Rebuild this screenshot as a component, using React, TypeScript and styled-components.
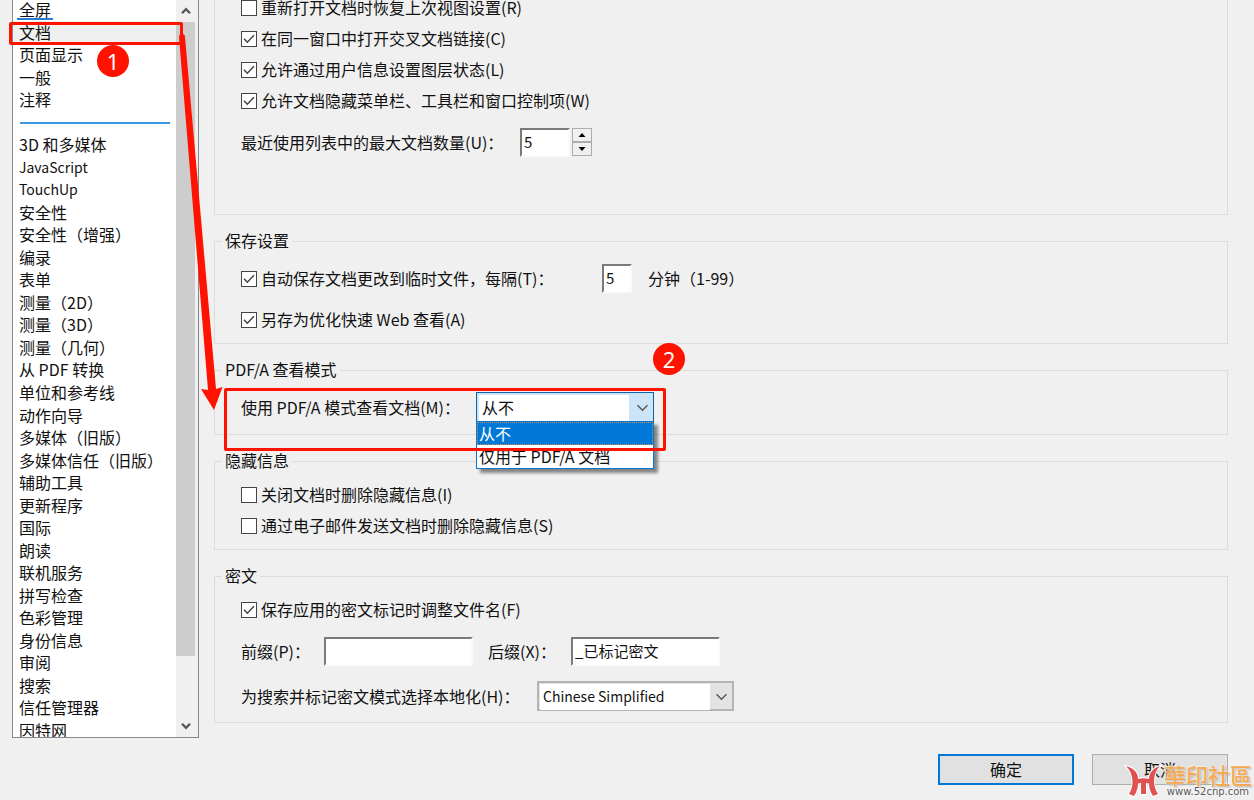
import React, { useState } from "react";
import styled, { createGlobalStyle, css } from "styled-components";

const font = `"Noto Sans CJK SC", "Noto Sans", sans-serif`;

const GlobalStyle = createGlobalStyle`
  *, *::before, *::after { box-sizing: border-box; }
  html, body { margin: 0; background: #f0f0f0; }
  body, button, input, select { font: 16px/24px ${font}; color: #111; }
  button { cursor: default; }
`;

const Dialog = styled.div`
  position: relative;
  display: grid;
  grid-template-columns: 187px 1fr;
  column-gap: 15px;
  align-items: start;
  padding: 0 26px 14px 12px;
`;

const ListPanel = styled.nav`
  display: grid;
  grid-template-columns: 1fr 22px;
  height: 738px;
  border: 1px solid #828790;
  border-top: 0;
  background: #fff;
  overflow: hidden;
`;

const CategoryList = styled.ul`
  display: grid;
  grid-auto-rows: 1fr;
  height: 743px;
  margin: -2px 0 0;
  padding: 0;
  list-style: none;
`;

const CategoryItem = styled.li<{ $active?: boolean }>`
  display: flex;
  align-items: center;
  min-height: 0;
  background: ${(p) => (p.$active ? "#f0f0f0" : "transparent")};
`;

const CategoryButton = styled.button<{ $marked?: boolean; $latin?: boolean }>`
  height: 22px;
  margin-left: 4px;
  padding: 0 2px;
  border: 0;
  background: none;
  font-size: ${(p) => (p.$latin ? 14 : 16)}px;
  line-height: 22px;
  white-space: nowrap;
  ${(p) => p.$marked && css`box-shadow: inset 0 -2px #2b7cd3;`}
`;

const Divider = styled.hr`
  width: 150px;
  height: 4px;
  margin: 0 0 0 7px;
  border: 0;
  border-bottom: 2px solid #3b97e0;
`;

const ScrollTrack = styled.div`
  display: flex;
  flex-direction: column;
  height: 737px;
  padding-right: 3px;
  background: #f0f0f0;
`;

const ScrollButton = styled.button`
  display: grid;
  place-items: center;
  height: 22px;
  padding: 0;
  border: 0;
  background: none;
`;

const ScrollThumb = styled.div`
  height: 634px;
  margin-bottom: auto;
  background: #cdcdcd;
`;

const Main = styled.main`
  display: flex;
  flex-direction: column;
  gap: 14px;
  min-width: 0;
`;

const Group = styled.fieldset<{ $top: number; $bottom: number }>`
  display: block;
  min-width: 0;
  margin: 0;
  padding: ${(p) => p.$top}px 26px ${(p) => p.$bottom}px;
  border: 1px solid #dcdcdc;
`;

const OpenGroup = styled(Group)`
  margin-top: -5px;
  border-top: 0;
`;

const Legend = styled.legend`
  margin-left: -19px;
  padding: 0 3px 2px;
  line-height: 22px;
`;

const Stack = styled.div<{ $gap: number }>`
  display: flex;
  flex-direction: column;
  gap: ${(p) => p.$gap}px;
`;

const Row = styled.div<{ $height?: number }>`
  display: flex;
  align-items: center;
  height: ${(p) => p.$height ?? 28}px;
  white-space: nowrap;
`;

const CheckLabel = styled.label`
  display: flex;
  align-items: center;
  gap: 4px;
  height: 24px;
  white-space: nowrap;
`;

const CheckBox = styled.span`
  display: grid;
  width: 16px;
  height: 16px;
  margin-top: 2px;
  > * { grid-area: 1 / 1; }
  svg { pointer-events: none; visibility: hidden; }
  input:checked + svg { visibility: visible; }
`;

const CheckInput = styled.input`
  appearance: none;
  width: 16px;
  height: 16px;
  margin: 0;
  border: 1px solid #444;
  background: #fff;
`;

const FieldLabel = styled.label<{ $width?: number; $gap?: number }>`
  width: ${(p) => (p.$width ? p.$width + "px" : "auto")};
  margin-left: ${(p) => p.$gap ?? 0}px;
`;

const SunkenInput = styled.input<{ $width: number }>`
  width: ${(p) => p.$width}px;
  height: 29px;
  padding: 0 3px 2px 2px;
  border: 2px solid;
  border-color: #7a7a7a #fafafa #fafafa #7a7a7a;
  border-radius: 0;
  outline: 0;
  background: #fff;
  font-size: 15px;
`;

const Spinner = styled.div`
  display: grid;
  grid-template-rows: 1fr 1fr;
  width: 20px;
  height: 28px;
  margin-left: 2px;
`;

const SpinButton = styled.button`
  display: grid;
  place-items: center;
  padding: 0;
  border: 1px solid #acacac;
  background: #f0f0f0;
`;

const Combo = styled.div<{ $width: number; $open?: boolean }>`
  position: relative;
  display: grid;
  width: ${(p) => p.$width}px;
  height: 30px;
  border: ${(p) => (p.$open ? "1px solid #0c62ac" : "2px solid #b4b4b4")};
  background: ${(p) => (p.$open ? "#cce4f7" : "#e3e3e3")};
`;

const ComboSelect = styled.select<{ $open?: boolean }>`
  grid-area: 1 / 1;
  appearance: none;
  margin: ${(p) => (p.$open ? "2px 24px 2px 2px" : "1px 22px 1px 1px")};
  padding: 0 4px 2px 3px;
  border: 0;
  border-radius: 0;
  outline: 0;
  background: #fff;
  font-size: ${(p) => (p.$open ? 16 : 14)}px;
`;

const ComboArrow = styled.svg`
  grid-area: 1 / 1;
  place-self: center end;
  margin-right: 4px;
  pointer-events: none;
`;

const Popup = styled.ul`
  position: absolute;
  top: 28px;
  left: -1px;
  right: -1px;
  z-index: 1;
  margin: 0;
  padding: 0;
  border: 1px solid #0078d7;
  background: #fff;
  box-shadow: 4px 4px 3px rgba(0, 0, 0, 0.45);
  list-style: none;
`;

const PopupItem = styled.li<{ $active?: boolean }>`
  height: 23px;
  padding-left: 2px;
  line-height: 22px;
  color: ${(p) => (p.$active ? "#fff" : "#111")};
  background: ${(p) => (p.$active ? "#0078d7" : "#fff")};
  outline: ${(p) => (p.$active ? "1px dotted #d98b45" : "0")};
  outline-offset: -1px;
`;

const Footer = styled.footer`
  display: flex;
  justify-content: flex-end;
  gap: 18px;
  margin-top: 17px;
`;

const DialogButton = styled.button<{ $primary?: boolean }>`
  width: 136px;
  height: 31px;
  padding: 0 0 2px;
  border: ${(p) => (p.$primary ? "2px solid #0078d7" : "1px solid #adadad")};
  background: #e1e1e1;
`;

const Frame = styled.div<{ $x: number; $y: number; $w: number; $h: number }>`
  position: absolute;
  left: ${(p) => p.$x}px;
  top: ${(p) => p.$y}px;
  width: ${(p) => p.$w}px;
  height: ${(p) => p.$h}px;
  z-index: 2;
  border: 3px solid #ff1200;
  border-radius: 2px;
  pointer-events: none;
`;

const Badge = styled.span<{ $x: number; $y: number }>`
  position: absolute;
  left: ${(p) => p.$x}px;
  top: ${(p) => p.$y}px;
  z-index: 2;
  width: 32px;
  height: 32px;
  border-radius: 50%;
  background: #ff1200;
  color: #fff;
  font: 22px/32px "Noto Sans", sans-serif;
  text-align: center;
`;

const Arrow = styled.svg`
  position: absolute;
  left: 170px;
  top: 20px;
  z-index: 2;
  pointer-events: none;
`;

const Watermark = styled.div`
  position: absolute;
  right: 2px;
  bottom: 0;
  z-index: 3;
  display: flex;
  align-items: center;
  gap: 2px;
  pointer-events: none;
`;

const WatermarkText = styled.div`
  display: flex;
  flex-direction: column;
  align-items: center;
`;

const WatermarkName = styled.span`
  font: 500 22px/22px "Noto Sans CJK TC", sans-serif;
  color: #f6a94f;
  text-shadow: 0 0 2px #fff, 1px 1px 2px #999, 0 0 2px #fff;
`;

const WatermarkUrl = styled.span`
  font: 10px/14px "DejaVu Sans", sans-serif;
  color: #555;
  text-shadow: 0 0 2px #fff, 0 0 2px #fff;
`;

const categories = [
  "全屏", "文档", "页面显示", "一般", "注释", null,
  "3D 和多媒体", "JavaScript", "TouchUp", "安全性", "安全性（增强）", "编录", "表单",
  "测量（2D）", "测量（3D）", "测量（几何）", "从 PDF 转换", "单位和参考线", "动作向导",
  "多媒体（旧版）", "多媒体信任（旧版）", "辅助工具", "更新程序", "国际", "朗读", "联机服务",
  "拼写检查", "色彩管理", "身份信息", "审阅", "搜索", "信任管理器", "因特网",
];

function Check({ label, checked = false }: { label: string; checked?: boolean }) {
  return (
    <CheckLabel>
      <CheckBox>
        <CheckInput type="checkbox" defaultChecked={checked} />
        <svg width="16" height="16" viewBox="0 0 16 16" fill="none" stroke="#444" strokeWidth="1.5">
          <path d="M3 7.8 6.3 11.2 13 4.2" />
        </svg>
      </CheckBox>
      {label}
    </CheckLabel>
  );
}

function Chevron({ up = false }: { up?: boolean }) {
  return (
    <svg width="10" height="8" viewBox="0 0 10 8" fill="none" stroke="#555" strokeWidth="2.2">
      <path d={up ? "M1 6.3 5 2.2 9 6.3" : "M1 1.7 5 5.8 9 1.7"} />
    </svg>
  );
}

function DropArrow() {
  return (
    <ComboArrow width="13" height="8" viewBox="0 0 13 8" fill="none" stroke="#555" strokeWidth="1.4">
      <path d="M1.5 1.2 6.5 6.2 11.5 1.2" />
    </ComboArrow>
  );
}

function Logo() {
  return (
    <svg width="38" height="34" viewBox="-2 -2 38 34" fill="#e05252" stroke="#fff" strokeWidth="2" paintOrder="stroke">
      <path d="M0 0C8 2 12 7 12 13Q17.500 11.500 23 13C23 7 27 2 34 0 27 7 26 19 32 28L27 30Q23 24 23 17.500L20 17V28H15V17L12 17.500Q12 24 8 30L3 28C9 19 7 7 0 0Z" />
    </svg>
  );
}

export default function App() {
  const [current, setCurrent] = useState("文档");
  const [recent, setRecent] = useState(5);

  return (
    <>
      <GlobalStyle />
      <Dialog>
        <ListPanel aria-label="种类">
          <CategoryList>
            {categories.map((name, i) =>
              name === null ? (
                <CategoryItem key={i}><Divider /></CategoryItem>
              ) : (
                <CategoryItem key={i} $active={name === current}>
                  <CategoryButton
                    type="button"
                    $marked={i === 0}
                    $latin={/^[A-Za-z]+$/.test(name)}
                    onClick={() => setCurrent(name)}
                  >
                    {name}
                  </CategoryButton>
                </CategoryItem>
              )
            )}
          </CategoryList>
          <ScrollTrack>
            <ScrollButton type="button" aria-label="向上滚动"><Chevron up /></ScrollButton>
            <ScrollThumb />
            <ScrollButton type="button" aria-label="向下滚动"><Chevron /></ScrollButton>
          </ScrollTrack>
        </ListPanel>

        <Main>
          <OpenGroup as="section" $top={0} $bottom={42}>
            <Stack $gap={7}>
              <Check label="重新打开文档时恢复上次视图设置(R)" />
              <Check label="在同一窗口中打开交叉文档链接(C)" checked />
              <Check label="允许通过用户信息设置图层状态(L)" checked />
              <Check label="允许文档隐藏菜单栏、工具栏和窗口控制项(W)" checked />
            </Stack>
            <Row $height={60}>
              <FieldLabel htmlFor="recent" $width={279}>最近使用列表中的最大文档数量(U)：</FieldLabel>
              <SunkenInput
                id="recent"
                $width={50}
                value={recent}
                onChange={(e) => setRecent(Number(e.target.value) || 0)}
              />
              <Spinner>
                <SpinButton type="button" aria-label="增加" onClick={() => setRecent(recent + 1)}>
                  <svg width="8" height="4" viewBox="0 0 8 4"><path d="M0.5 4 4 0 7.5 4z" /></svg>
                </SpinButton>
                <SpinButton type="button" aria-label="减少" onClick={() => setRecent(recent - 1)}>
                  <svg width="8" height="4" viewBox="0 0 8 4"><path d="M0.5 0 4 4 7.5 0z" /></svg>
                </SpinButton>
              </Spinner>
            </Row>
          </OpenGroup>

          <Group $top={11} $bottom={12}>
            <Legend>保存设置</Legend>
            <Stack $gap={15}>
              <Row>
                <FieldLabel as="div" $width={361}>
                  <Check label="自动保存文档更改到临时文件，每隔(T)：" checked />
                </FieldLabel>
                <SunkenInput id="minutes" $width={30} defaultValue="5" />
                <FieldLabel htmlFor="minutes" $gap={16}>分钟（1-99）</FieldLabel>
              </Row>
              <Check label="另存为优化快速 Web 查看(A)" checked />
            </Stack>
          </Group>

          <Group $top={10} $bottom={12}>
            <Legend>PDF/A 查看模式</Legend>
            <Row $height={30}>
              <FieldLabel htmlFor="pdfa" $width={235}>使用 PDF/A 模式查看文档(M)：</FieldLabel>
              <Combo $width={178} $open>
                <ComboSelect id="pdfa" $open defaultValue="从不">
                  <option>从不</option>
                  <option>仅用于 PDF/A 文档</option>
                </ComboSelect>
                <DropArrow />
                <Popup role="listbox">
                  <PopupItem role="option" aria-selected $active>从不</PopupItem>
                  <PopupItem role="option" aria-selected={false}>仅用于 PDF/A 文档</PopupItem>
                </Popup>
              </Combo>
            </Row>
          </Group>

          <Group $top={9} $bottom={12}>
            <Legend>隐藏信息</Legend>
            <Stack $gap={7}>
              <Check label="关闭文档时删除隐藏信息(I)" />
              <Check label="通过电子邮件发送文档时删除隐藏信息(S)" />
            </Stack>
          </Group>

          <Group $top={9} $bottom={11}>
            <Legend>密文</Legend>
            <Stack $gap={16}>
              <Check label="保存应用的密文标记时调整文件名(F)" checked />
              <Row>
                <FieldLabel htmlFor="prefix" $width={83}>前缀(P)：</FieldLabel>
                <SunkenInput id="prefix" $width={149} />
                <FieldLabel htmlFor="suffix" $width={83} $gap={15}>后缀(X)：</FieldLabel>
                <SunkenInput id="suffix" $width={149} defaultValue="_已标记密文" />
              </Row>
              <Row $height={30}>
                <FieldLabel htmlFor="locale" $width={296}>为搜索并标记密文模式选择本地化(H)：</FieldLabel>
                <Combo $width={197}>
                  <ComboSelect id="locale" defaultValue="Chinese Simplified">
                    <option>Chinese Simplified</option>
                  </ComboSelect>
                  <DropArrow />
                </Combo>
              </Row>
            </Stack>
          </Group>

          <Footer>
            <DialogButton type="button" $primary>确定</DialogButton>
            <DialogButton type="button">取消</DialogButton>
          </Footer>
        </Main>

        <Frame $x={9} $y={22} $w={174} $h={23} />
        <Frame $x={224} $y={388} $w={442} $h={63} />
        <Arrow width="60" height="400" viewBox="170 20 60 400" fill="#ff1200">
          <path d="M179 37a3 3 0 0 1 6 0L216 389 222.500 387 214 410 201 389 208 390z" />
        </Arrow>
        <Badge $x={97} $y={45}>1</Badge>
        <Badge $x={653} $y={343}>2</Badge>
        <Watermark>
          <Logo />
          <WatermarkText>
            <WatermarkName>華印社區</WatermarkName>
            <WatermarkUrl>www.52cnp.com</WatermarkUrl>
          </WatermarkText>
        </Watermark>
      </Dialog>
    </>
  );
}
